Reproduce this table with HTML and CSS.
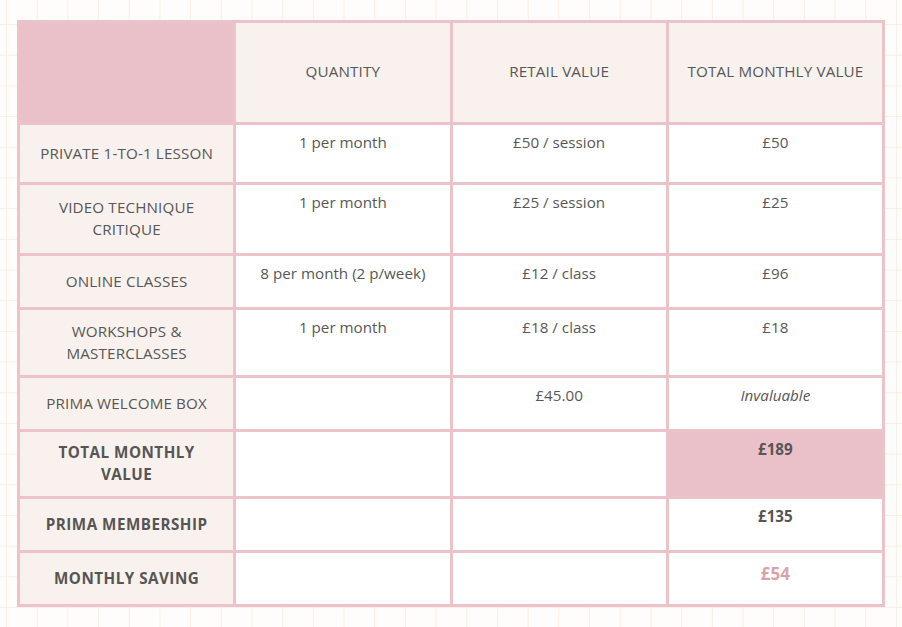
FILE: index.html
```html
<!DOCTYPE html>
<html>
<head>
<meta charset="utf-8">
<link rel="stylesheet" href="styles.css">
</head>
<body>
<div class="page">
<table class="value-table">
  <colgroup><col><col><col><col></colgroup>
  <tr class="r-head">
    <th class="corner"></th>
    <th>QUANTITY</th>
    <th>RETAIL VALUE</th>
    <th>TOTAL MONTHLY VALUE</th>
  </tr>
  <tr class="r1">
    <td class="label">PRIVATE 1-TO-1 LESSON</td>
    <td>1 per month</td>
    <td>£50 / session</td>
    <td>£50</td>
  </tr>
  <tr class="r2">
    <td class="label">VIDEO TECHNIQUE<br>CRITIQUE</td>
    <td>1 per month</td>
    <td>£25 / session</td>
    <td>£25</td>
  </tr>
  <tr class="r3">
    <td class="label">ONLINE CLASSES</td>
    <td>8 per month (2 p/week)</td>
    <td>£12 / class</td>
    <td>£96</td>
  </tr>
  <tr class="r4">
    <td class="label">WORKSHOPS &amp;<br>MASTERCLASSES</td>
    <td>1 per month</td>
    <td>£18 / class</td>
    <td>£18</td>
  </tr>
  <tr class="r5">
    <td class="label">PRIMA WELCOME BOX</td>
    <td></td>
    <td>£45.00</td>
    <td><em>Invaluable</em></td>
  </tr>
  <tr class="r6">
    <td class="label strong">TOTAL MONTHLY<br>VALUE</td>
    <td></td>
    <td></td>
    <td class="strong highlight">£189</td>
  </tr>
  <tr class="r7">
    <td class="label strong">PRIMA MEMBERSHIP</td>
    <td></td>
    <td></td>
    <td class="strong">£135</td>
  </tr>
  <tr class="r8">
    <td class="label strong">MONTHLY SAVING</td>
    <td></td>
    <td></td>
    <td class="strong saving">£54</td>
  </tr>
</table>
</div>
</body>
</html>
```

FILE: styles.css
```css
html, body {
  margin: 0;
  padding: 0;
}
body {
  width: 902px;
  height: 627px;
  overflow: hidden;
  background-color: #fffdfb;
  background-image:
    linear-gradient(to right, #f8eee4 1px, transparent 1px),
    linear-gradient(to bottom, #f8eee4 1px, transparent 1px);
  background-size: 30.7px 30.7px;
  background-position: 6px 24px;
  font-family: "Open Sans", "Noto Sans", sans-serif;
  color: #575757;
}
.page {
  padding: 20px 0 0 17px;
}
.value-table {
  border-collapse: collapse;
  table-layout: fixed;
  width: 868px;
  font-size: 15.2px;
  line-height: 22px;
}
.value-table col {
  width: 25%;
}
.value-table th,
.value-table td {
  border: 3px solid #ecc3cb;
  text-align: center;
  padding: 6px 8px 0;
  vertical-align: top;
  background: #ffffff;
  font-weight: 400;
}
.value-table th {
  background: #f9f1ed;
  vertical-align: middle;
  padding: 0 8px 3px;
  letter-spacing: 0.15px;
}
.value-table th.corner {
  background: #ebc1c9;
}
.value-table td.label {
  background: #f9f1ed;
  vertical-align: middle;
  padding: 0 8px 2px;
  letter-spacing: 0.15px;
}
.value-table .strong {
  font-weight: 700;
  color: #555555;
}
.value-table td.label.strong {
  letter-spacing: 0.5px;
}
.value-table td.highlight {
  background: #ebc1c9;
}
.value-table td.saving {
  color: #d9a3aa;
  font-size: 17px;
  padding-top: 10px;
}
.r-head th { height: 96px; }
.r1 td { height: 51px; }
.r2 td { height: 62px; }
.r3 td { height: 45px; }
.r4 td { height: 59px; }
.r5 td { height: 45px; }
.r6 td { height: 58px; }
.r7 td { height: 45px; }
.r8 td { height: 45px; }
.r8 td.saving { height: 41px; }
```
